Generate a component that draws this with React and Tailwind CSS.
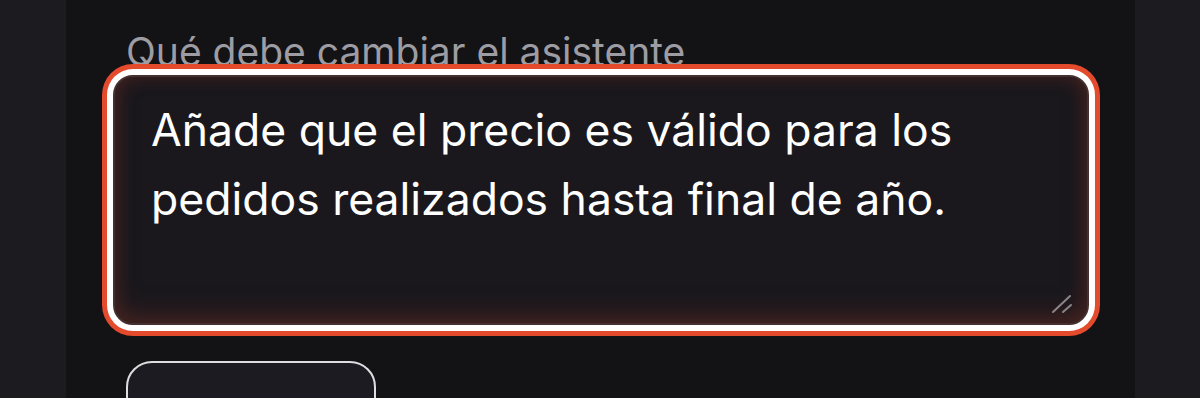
import React from "react";

export default function App() {
  return (
    <div
      className="flex h-[398px] w-full overflow-hidden bg-[#1c1b20]"
      style={{ fontFamily: "Inter, 'Noto Sans', sans-serif" }}
    >
      <div className="w-[66px] shrink-0" />
      <main className="flex w-[1069px] shrink-0 flex-col bg-[#131215] pl-[47px] pr-[46px] pt-[28px]">
        <label className="ml-[13px] block whitespace-nowrap text-[39px] leading-[48px] text-[#9d9ca3]">
          Qué debe cambiar el asistente
        </label>
        {/* textarea with focus rings */}
        <div className="relative -mt-[1px] h-[250px] w-[976px] self-start">
          <textarea
            defaultValue="Añade que el precio es válido para los pedidos realizados hasta final de año."
            className="block h-[250px] w-[976px] resize-none rounded-[20px] border-2 border-[#45302f] bg-[#1a181d] pl-[36px] pr-[30px] pt-[19px] text-[44.5px] leading-[69px] text-white outline-none shadow-[inset_0_-10px_24px_rgba(110,45,38,0.35),inset_0_0_18px_rgba(110,45,38,0.4),0_0_0_6px_#ffffff,0_0_0_11px_#e44a2c]"
            style={{ fontFamily: "Inter, 'Noto Sans', sans-serif" }}
          />
          <svg
            className="pointer-events-none absolute right-[16px] bottom-[11px]"
            width="22"
            height="20"
            viewBox="0 0 22 20"
          >
            <line x1="2" y1="18" x2="19" y2="2" stroke="#8a8589" strokeWidth="2" strokeLinecap="round" />
            <line x1="12" y1="18" x2="20" y2="11" stroke="#8a8589" strokeWidth="2" strokeLinecap="round" />
          </svg>
        </div>
        <button className="ml-[13px] mt-[36px] h-[80px] w-[250px] shrink-0 rounded-[26px] border-2 border-[#dedee0] bg-[#1c1b21]" />
      </main>
      <div className="flex-1" />
    </div>
  );
}
